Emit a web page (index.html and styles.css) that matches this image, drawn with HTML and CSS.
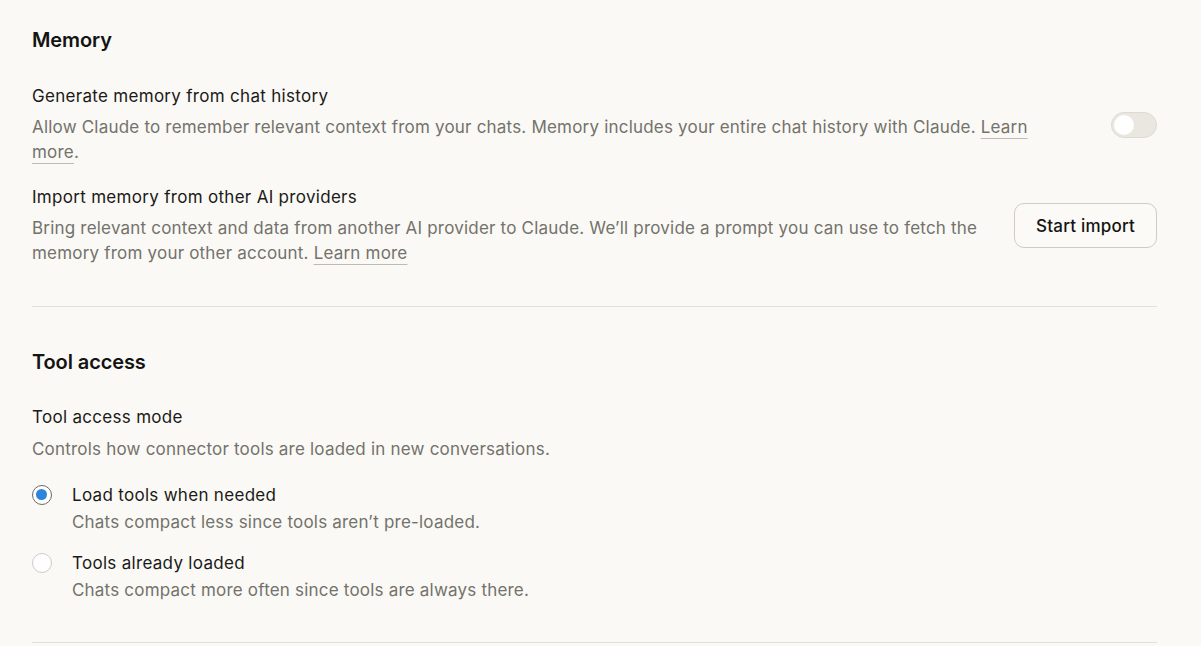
FILE: index.html
```html
<!DOCTYPE html>
<html>
<head>
<meta charset="utf-8">
<link rel="stylesheet" href="styles.css">
</head>
<body>
<main class="page">
  <section class="section">
    <h2 class="section-title">Memory</h2>
    <div class="row">
      <div class="row-text">
        <div class="label">Generate memory from chat history</div>
        <div class="desc">Allow Claude to remember relevant context from your chats. Memory includes your entire chat history with Claude. <a class="link">Learn more</a>.</div>
      </div>
      <div class="toggle"><span class="knob"></span></div>
    </div>
    <div class="row row-import">
      <div class="row-text">
        <div class="label">Import memory from other AI providers</div>
        <div class="desc">Bring relevant context and data from another AI provider to Claude. We’ll provide a prompt you can use to fetch the memory from your other account. <a class="link">Learn more</a></div>
      </div>
      <button class="btn">Start import</button>
    </div>
  </section>
  <hr class="divider">
  <section class="section section-tools">
    <h2 class="section-title">Tool access</h2>
    <div class="label">Tool access mode</div>
    <div class="desc mode-desc">Controls how connector tools are loaded in new conversations.</div>
    <div class="options">
      <div class="option">
        <span class="radio checked"></span>
        <div>
          <div class="label">Load tools when needed</div>
          <div class="desc">Chats compact less since tools aren’t pre-loaded.</div>
        </div>
      </div>
      <div class="option">
        <span class="radio"></span>
        <div>
          <div class="label">Tools already loaded</div>
          <div class="desc">Chats compact more often since tools are always there.</div>
        </div>
      </div>
    </div>
  </section>
  <hr class="divider">
</main>
</body>
</html>
```
FILE: styles.css
```css
html, body {
  margin: 0;
  padding: 0;
  background: #faf9f5;
}
body {
  font-family: Inter, "Noto Sans", sans-serif;
  color: #141413;
  font-size: 17px;
  letter-spacing: 0.2px;
}
.page {
  padding: 26px 44px 0 32px;
}
.section-title {
  margin: 0 0 30px;
  font-size: 20px;
  font-weight: 600;
  line-height: 28px;
  letter-spacing: -0.1px;
}
.row {
  display: flex;
  align-items: center;
  justify-content: space-between;
  gap: 16px;
}
.row-text {
  flex: 1;
  max-width: 1000px;
}
.row-import {
  margin-top: 20px;
}
.label {
  font-size: 17px;
  line-height: 24px;
  color: #1a1a18;
  letter-spacing: 0.3px;
}
.desc {
  color: #73726c;
  font-size: 17px;
  line-height: 25px;
  margin-top: 7px;
}
.mode-desc {
  margin-top: 8px;
}
.link {
  color: #73726c;
  text-decoration: underline;
  text-decoration-color: #bcbab3;
  text-underline-offset: 5px;
  text-decoration-thickness: 1px;
}
.toggle {
  width: 46px;
  height: 26px;
  border-radius: 13px;
  background: #e9e7e0;
  border: 1px solid #dcdad3;
  box-sizing: border-box;
  position: relative;
  flex: none;
}
.knob {
  position: absolute;
  left: 2px;
  top: 2px;
  width: 20px;
  height: 20px;
  border-radius: 50%;
  background: #fff;
}
.btn {
  flex: none;
  width: 143px;
  height: 45px;
  border: 1px solid #cfccc4;
  border-radius: 10px;
  background: #fbfaf7;
  font-family: inherit;
  font-size: 17px;
  font-weight: 500;
  letter-spacing: 0.2px;
  color: #141413;
}
.divider {
  border: 0;
  border-top: 1px solid #e2e0da;
  margin: 40px 0 0;
}
.section-tools {
  padding-top: 41px;
}
.section-tools .section-title {
  margin-bottom: 29px;
}
.options {
  margin-top: 21px;
  display: flex;
  flex-direction: column;
  gap: 16px;
}
.option {
  display: flex;
  gap: 20px;
}
.option .desc {
  margin-top: 3px;
}
.radio {
  flex: none;
  width: 20px;
  height: 20px;
  box-sizing: border-box;
  border-radius: 50%;
  border: 1px solid #cfccc4;
  background: #fff;
  margin-top: 2px;
  position: relative;
}
.radio.checked {
  border: 1.5px solid #6b6a65;
}
.radio.checked::after {
  content: "";
  position: absolute;
  left: 3px;
  top: 3px;
  width: 11px;
  height: 11px;
  border-radius: 50%;
  background: #2c84db;
}
.section-tools + .divider {
  margin-top: 39px;
}
```
